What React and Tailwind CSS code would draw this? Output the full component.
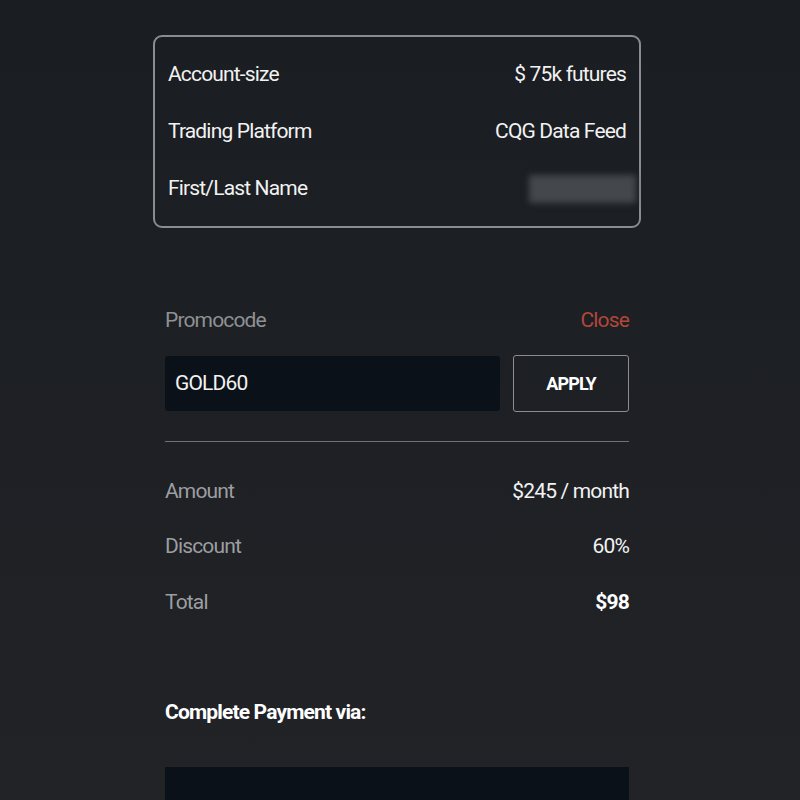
export default function App() {
  const details = [
    { label: 'Account-size', value: '$ 75k futures' },
    { label: 'Trading Platform', value: 'CQG Data Feed' },
    { label: 'First/Last Name', value: null },
  ];

  const summary = [
    { label: 'Amount', value: '$245 / month' },
    { label: 'Discount', value: '60%' },
    { label: 'Total', value: '$98', bold: true },
  ];

  return (
    <div className="h-[800px] overflow-hidden bg-gradient-to-b from-[#1a1d21] to-[#212327] font-['Roboto',sans-serif] text-[21px] tracking-[-0.04em] text-[#f2f2f2]">
      <div className="pl-[153px] pt-[35px] w-[641px]">
        <div className="rounded-[9px] border-2 border-[#8a8c90] px-[13px] pt-[19px] pb-[18px] flex flex-col gap-[19px]">
          {details.map((row) => (
            <div key={row.label} className="flex h-[38px] items-center justify-between">
              <span>{row.label}</span>
              {row.value ? (
                <span>{row.value}</span>
              ) : (
                <span className="mr-[-10px] h-[28px] w-[107px] bg-[#44474b] blur-[3px]" />
              )}
            </div>
          ))}
        </div>

        <div className="px-[12px]">
          <div className="mt-[79px] flex items-center justify-between h-[28px]">
            <span className="text-[#8f9194]">Promocode</span>
            <button className="text-[#b4463a]">Close</button>
          </div>

          <div className="mt-[20px] flex items-center gap-[13px]">
            <div className="flex h-[55px] flex-1 items-center rounded-[3px] bg-[#0b1118] px-[10px]">
              GOLD60
            </div>
            <button className="h-[57px] w-[116px] rounded-[3px] border border-[#8a8c90] text-[18px] font-bold text-white">
              APPLY
            </button>
          </div>

          <div className="mt-[29px] h-px bg-[#6f7175]" />

          <div className="mt-[35px] flex flex-col gap-[26.5px]">
            {summary.map((row) => (
              <div key={row.label} className="flex h-[29px] items-center justify-between">
                <span className="text-[#9c9ea1]">{row.label}</span>
                <span className={row.bold ? 'font-bold text-white' : ''}>{row.value}</span>
              </div>
            ))}
          </div>

          <div className="mt-[82px] h-[28px] flex items-center font-bold text-white">
            Complete Payment via:
          </div>

          <div className="mt-[40px] h-[60px] bg-[#0b1118]" />
        </div>
      </div>
    </div>
  );
}
